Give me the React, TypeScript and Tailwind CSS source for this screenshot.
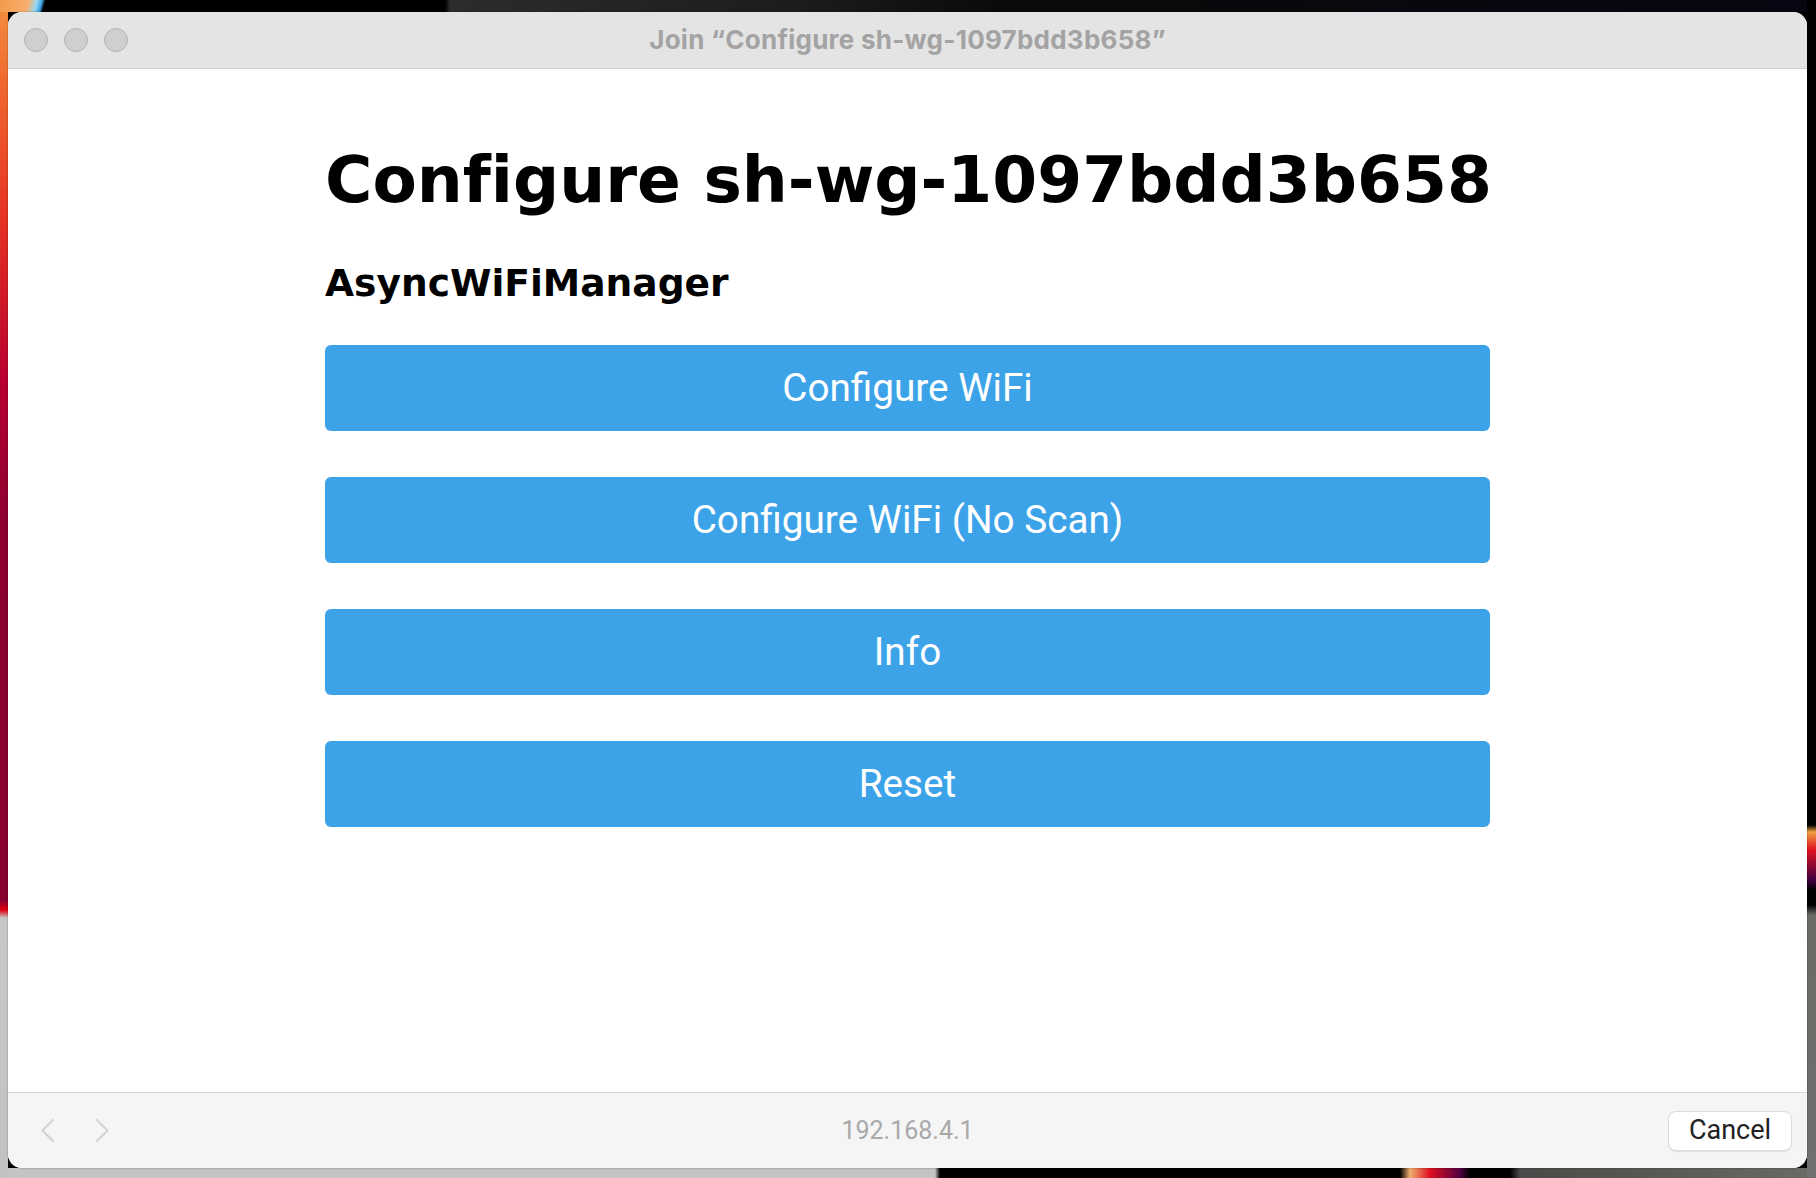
import React from "react";

const buttons = ["Configure WiFi", "Configure WiFi (No Scan)", "Info", "Reset"];

export default function App() {
  return (
    <div className="w-[1816px] h-[1178px] overflow-hidden pt-[12px] pl-[8px] bg-black bg-no-repeat [background-image:linear-gradient(105deg,#f39a4a_0px,#f7b070_28px,#9ad8f0_36px,#3aa0e0_41px,#000_44px),linear-gradient(to_bottom,#f49040_0px,#f06a30_80px,#e63222_220px,#b80030_380px,#8c0030_520px,#860030_900px,#e00010_910px,#c8c8c8_918px,#c2c2c2_1178px),linear-gradient(to_bottom,#000_0px,#000_825px,#f0a040_832px,#e01020_850px,#400040_880px,#000_890px,#000_905px,#6a6a66_915px,#707070_1178px),linear-gradient(to_right,#c4c4c4_0px,#c4c4c4_935px,#000_940px,#000_1400px,#f0b070_1410px,#e01020_1430px,#500040_1460px,#000_1470px,#000_1510px,#4a4a48_1520px,#6a6a66_1816px),linear-gradient(to_right,#000_0px,#000_445px,#2c2c2c_450px,#1c1c1c_800px,#0a0a0a_1000px,#060612_1816px)] [background-size:60px_12px,8px_100%,9px_100%,100%_10px,100%_12px] [background-position:0_0,0_0,right_top,0_bottom,0_0]">
      <div className="w-[1799px] h-[1156px] rounded-[14px] overflow-hidden bg-white flex flex-col shadow-[0_0_2px_rgba(0,0,0,0.4)]">
        {/* Title bar */}
        <div className="relative h-[57px] shrink-0 bg-[#e4e4e4] border-b border-[#d2d2d2] flex items-center justify-center pb-[2px]">
          <div className="absolute left-[16px] top-[16px] flex gap-[16px]">
            <span className="w-[24px] h-[24px] rounded-full bg-[#cfcfcf] border border-[#b4b4b4]" />
            <span className="w-[24px] h-[24px] rounded-full bg-[#cfcfcf] border border-[#b4b4b4]" />
            <span className="w-[24px] h-[24px] rounded-full bg-[#cfcfcf] border border-[#b4b4b4]" />
          </div>
          <span className="font-['Inter',sans-serif] font-bold text-[26px] text-[#a3a3a3] tracking-[0.25px] [font-variant-ligatures:none]">
            Join “Configure sh-wg-1097bdd3b658”
          </span>
        </div>

        {/* Content */}
        <div className="flex-1 flex justify-center">
          <div className="w-[1165px] flex flex-col">
            <h1 className="mt-[78px] font-['DejaVu_Sans',sans-serif] font-bold text-[64.6px] leading-[65px] text-black whitespace-nowrap [font-variant-ligatures:none]">
              Configure sh-wg-1097bdd3b658
            </h1>
            <h3 className="mt-[52px] font-['DejaVu_Sans',sans-serif] font-bold text-[37.6px] leading-[38px] text-black [font-variant-ligatures:none]">
              AsyncWiFiManager
            </h3>
            <div className="mt-[43px] flex flex-col gap-[46px]">
              {buttons.map((b) => (
                <button
                  key={b}
                  className="h-[86px] w-full rounded-[6px] bg-[#3ca3e9] text-white font-['Roboto',sans-serif] text-[38.7px] leading-none flex items-center justify-center"
                >
                  {b}
                </button>
              ))}
            </div>
          </div>
        </div>

        {/* Footer */}
        <div className="h-[76px] shrink-0 bg-[#f5f5f5] border-t border-[#d8d8d8] grid grid-cols-[1fr_auto_1fr] items-center">
          <div className="flex items-center gap-[42px] pl-[33px]">
            <svg width="13" height="23" viewBox="0 0 13 23" fill="none">
              <polyline points="12,1 1.5,11.5 12,22" stroke="#d2d2d2" strokeWidth="2" strokeLinecap="round" strokeLinejoin="round" />
            </svg>
            <svg width="13" height="23" viewBox="0 0 13 23" fill="none">
              <polyline points="1,1 11.5,11.5 1,22" stroke="#d2d2d2" strokeWidth="2" strokeLinecap="round" strokeLinejoin="round" />
            </svg>
          </div>
          <span className="font-['Roboto',sans-serif] text-[25px] text-[#a9a9a9]">192.168.4.1</span>
          <div className="flex justify-end pr-[15px]">
            <button className="w-[124px] h-[40px] rounded-[8px] bg-white border border-[#dcdcdc] shadow-[0_1px_1px_rgba(0,0,0,0.08)] font-['Roboto',sans-serif] text-[27px] leading-none text-[#222]">
              Cancel
            </button>
          </div>
        </div>
      </div>
    </div>
  );
}
